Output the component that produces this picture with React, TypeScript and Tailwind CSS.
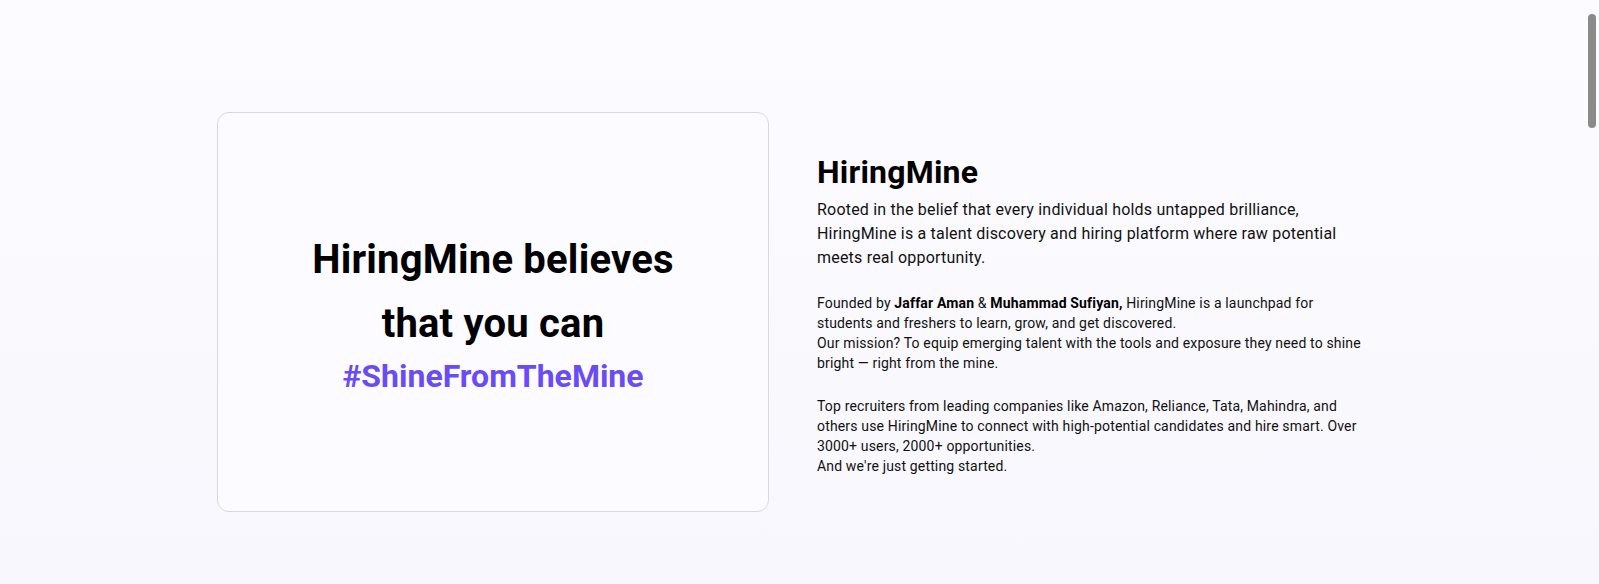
import React from 'react';

export default function App() {
  return (
    <div className="flex h-screen overflow-hidden bg-gradient-to-b from-[#fcfbff] to-[#f8f7fd] font-['Roboto',sans-serif] text-black">
      <main className="min-w-0 flex-1">
        <section className="py-28">
          <div className="mx-auto grid max-w-6xl grid-cols-2 items-center gap-12">
            {/* tagline card */}
            <div className="flex h-[400px] flex-col items-center justify-center rounded-xl border border-[#d9d7e0] bg-[#fcfbff] text-center">
              <h2 className="text-[40px] font-bold leading-[64px] tracking-[0.2px]">
                HiringMine believes
                <br />
                that you can
              </h2>
              <p className="text-[32px] font-bold leading-10 text-[#6a4cf6]">
                #ShineFromTheMine
              </p>
            </div>

            {/* about */}
            <div>
              <h1 className="mb-[6px] mt-[4px] text-[32px] font-bold leading-10 tracking-[0.2px]">
                HiringMine
              </h1>
              <p className="text-base leading-6 tracking-[0.2px] text-[#111]">
                Rooted in the belief that every individual holds untapped brilliance,
                HiringMine is a talent discovery and hiring platform where raw potential
                meets real opportunity.
              </p>
              <p className="mt-[23px] text-sm leading-5 tracking-[0.16px] text-[#111]">
                Founded by <b className="font-bold text-black">Jaffar Aman</b> &amp;{' '}
                <b className="font-bold text-black">Muhammad Sufiyan,</b> HiringMine is a
                launchpad for students and freshers to learn, grow, and get discovered.
                <br />
                Our mission? To equip emerging talent with the tools and exposure they need
                to shine bright — right from the mine.
              </p>
              <p className="mt-[23px] text-sm leading-5 tracking-[0.16px] text-[#111]">
                Top recruiters from leading companies like Amazon, Reliance, Tata, Mahindra,
                and others use HiringMine to connect with high-potential candidates and hire
                smart. Over 3000+ users, 2000+ opportunities.
                <br />
                And we're just getting started.
              </p>
            </div>
          </div>
        </section>
      </main>

      {/* page scrollbar */}
      <aside className="w-[13px] shrink-0 pl-[2px] pt-[14px]">
        <div className="h-[114px] w-[8px] rounded-full bg-[#8a8a8a]" />
      </aside>
    </div>
  );
}
